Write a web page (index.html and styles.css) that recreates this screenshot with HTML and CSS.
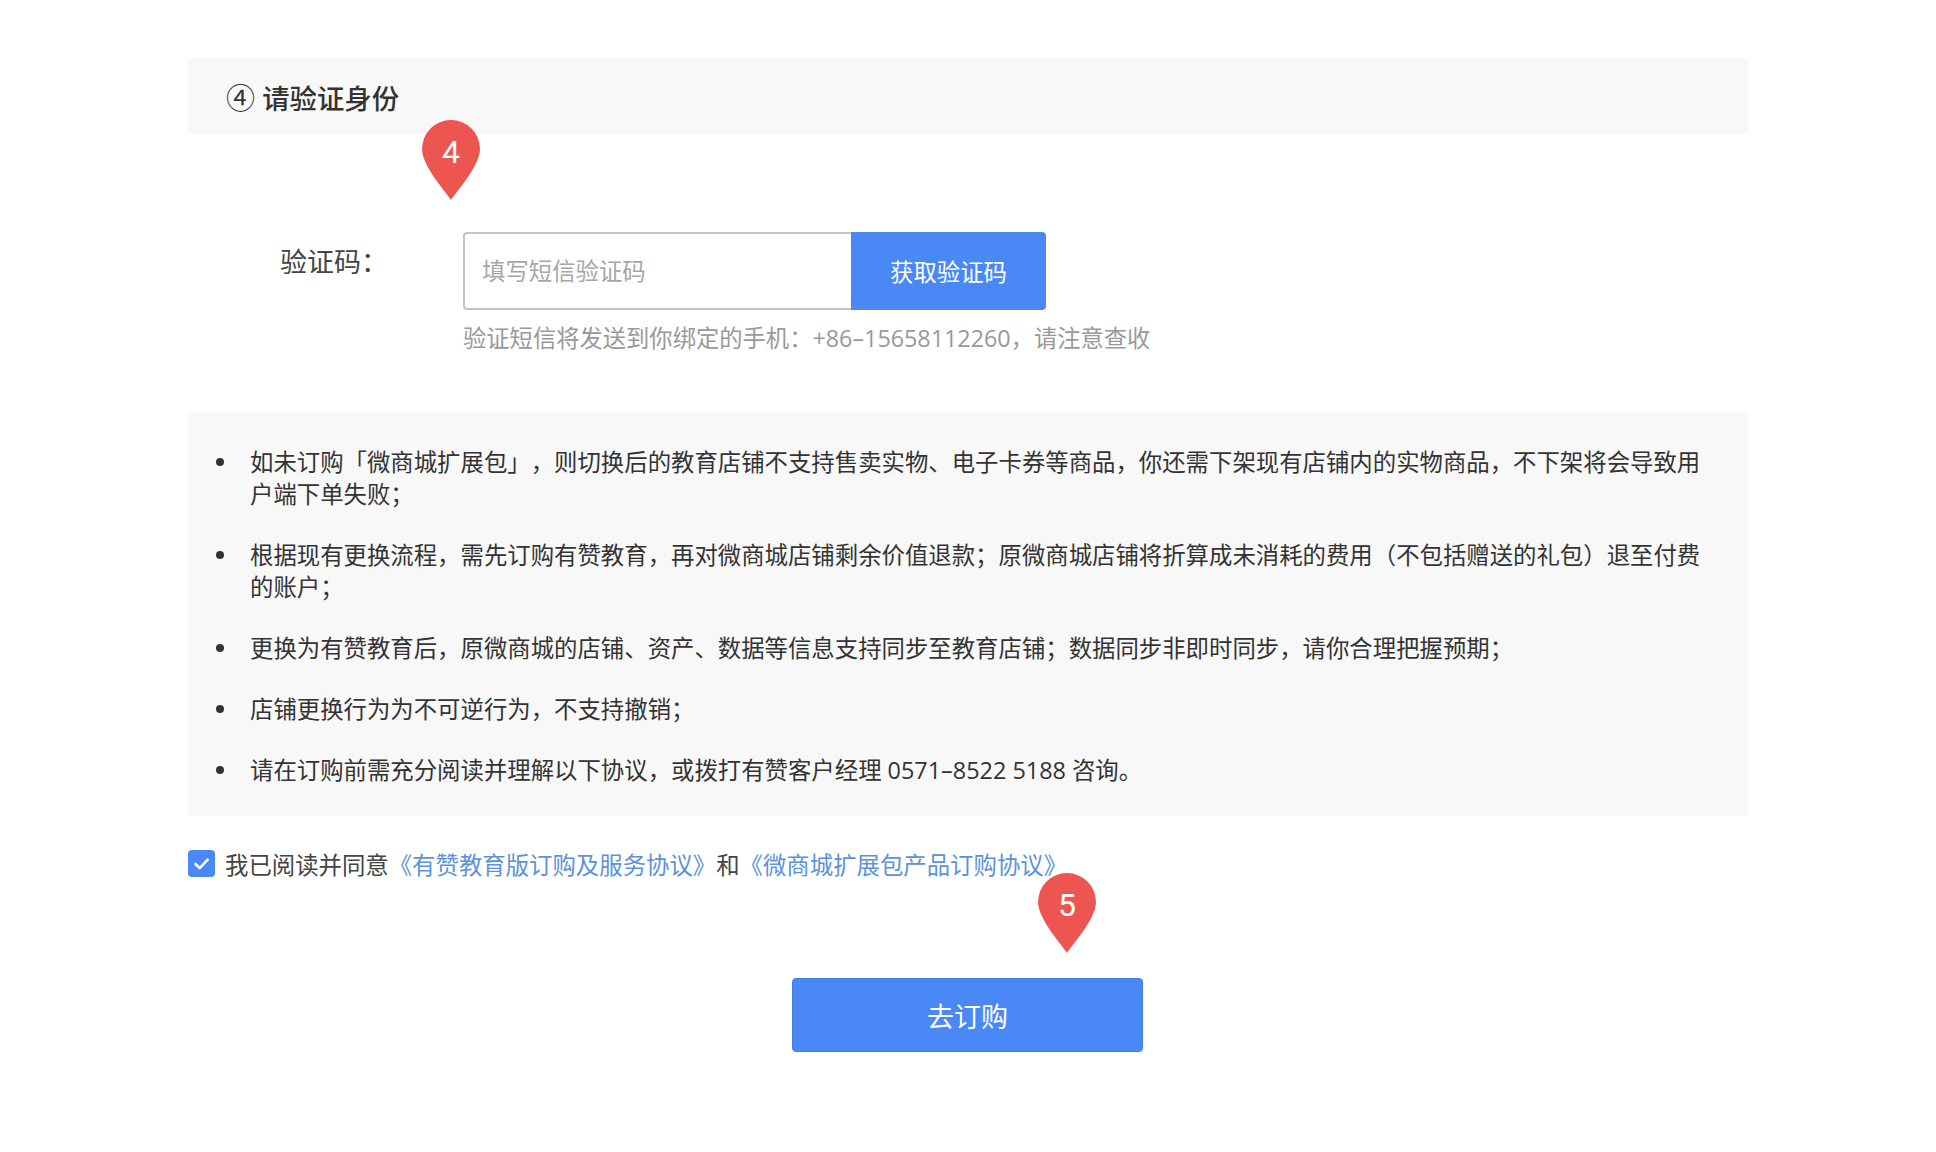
FILE: index.html
```html
<!DOCTYPE html>
<html lang="zh-CN">

<head>
    <meta charset="utf-8">
    <meta name="viewport" content="width=device-width, initial-scale=1.0">
    <title>请验证身份</title>
    <link rel="stylesheet" href="styles.css">
</head>

<body>
    <div class="container">
        <h2 class="titel"><span class="nummer">④</span> 请验证身份</h2>

        <section class="verify">
            <label class="verify_label" for="kode">验证码：</label>
            <div class="verify_felt">
                <div class="verify_input">
                    <input id="kode" type="text" placeholder="填写短信验证码">
                    <button class="knap_kode">获取验证码</button>
                </div>
                <p class="hint">验证短信将发送到你绑定的手机：+86–15658112260，请注意查收</p>
            </div>
        </section>

        <ul class="notice">
            <li>如未订购「微商城扩展包」，则切换后的教育店铺不支持售卖实物、电子卡券等商品，你还需下架现有店铺内的实物商品，不下架将会导致用户端下单失败；</li>
            <li>根据现有更换流程，需先订购有赞教育，再对微商城店铺剩余价值退款；原微商城店铺将折算成未消耗的费用（不包括赠送的礼包）退至付费的账户；</li>
            <li>更换为有赞教育后，原微商城的店铺、资产、数据等信息支持同步至教育店铺；数据同步非即时同步，请你合理把握预期；</li>
            <li>店铺更换行为为不可逆行为，不支持撤销；</li>
            <li>请在订购前需充分阅读并理解以下协议，或拨打有赞客户经理 0571–8522 5188 咨询。</li>
        </ul>

        <div class="agree">
            <span class="checkbox">
                <svg viewBox="0 0 27 27" width="27" height="27">
                    <path d="M7.5 14l4.2 4.2 8-8.6" fill="none" stroke="#fff" stroke-width="2.6" stroke-linecap="round" stroke-linejoin="round" />
                </svg>
            </span>
            <p>我已阅读并同意<a href="#">《有赞教育版订购及服务协议》</a>和<a href="#">《微商城扩展包产品订购协议》</a></p>
        </div>

        <div class="submit">
            <button class="knap_submit">去订购</button>
        </div>

        <!-- markører -->
        <div class="pin pin_4">
            <svg viewBox="0 0 58 80" width="58" height="80">
                <path d="M29 80C24 72 0 46 0 29A29 29 0 0 1 58 29C58 46 34 72 29 80Z" fill="#ed5550" />
            </svg>
            <span>4</span>
        </div>
        <div class="pin pin_5">
            <svg viewBox="0 0 58 80" width="58" height="80">
                <path d="M29 80C24 72 0 46 0 29A29 29 0 0 1 58 29C58 46 34 72 29 80Z" fill="#ed5550" />
            </svg>
            <span>5</span>
        </div>
    </div>
</body>

</html>
```

FILE: styles.css
```css
* {
    box-sizing: border-box;
}

body {
    margin: 0;
    background-color: #fff;
    color: #333;
    font-family: "Open Sans", "Noto Sans CJK SC", sans-serif;
    text-spacing-trim: space-all;
}

.container {
    position: relative;
    width: 1560px;
    height: 1152px;
    margin-left: 188px;
    padding-top: 58px;
}

.titel {
    margin: 0;
    height: 76px;
    padding: 20px 0 0 38px;
    background-color: #f8f8f8;
    font-size: 27.4px;
    line-height: 40px;
    font-weight: 500;
    color: #333;
}

.nummer {
    font-size: 29px;
    font-weight: 400;
}

/* Verify form */
.verify {
    display: flex;
    padding-top: 98px;
}

.verify_label {
    width: 275px;
    padding: 12px 0 0 92px;
    font-size: 27px;
    line-height: 36px;
    color: #444;
}

.verify_input {
    display: flex;
    height: 78px;
}

.verify_input input {
    width: 388px;
    padding: 0 17px;
    border: 2px solid #c4c4c4;
    border-right: none;
    border-radius: 4px 0 0 4px;
    outline: none;
    font-family: inherit;
    font-size: 23.4px;
}

.verify_input input::placeholder {
    color: #a6a6a6;
}

.knap_kode {
    width: 195px;
    padding-bottom: 2px;
    border: none;
    border-radius: 0 4px 4px 0;
    background-color: #4a89f5;
    color: #fff;
    font-family: inherit;
    font-size: 23.4px;
}

.hint {
    margin: 11px 0 0;
    font-size: 23.3px;
    line-height: 34px;
    color: #999;
}

/* Notice */
.notice {
    margin: 58px 0 0;
    height: 403px;
    padding: 33px 38px 0 62px;
    border-radius: 4px;
    background-color: #f8f8f8;
    list-style: none;
    font-size: 23.4px;
    line-height: 32px;
    color: #333;
}

.notice li {
    position: relative;
    margin-bottom: 29px;
}

.notice li::before {
    content: "";
    position: absolute;
    left: -34px;
    top: 12px;
    width: 8px;
    height: 8px;
    border-radius: 50%;
    background-color: #333;
}

/* Agree */
.agree {
    display: flex;
    align-items: flex-start;
    margin-top: 34px;
}

.checkbox {
    display: block;
    width: 27px;
    height: 27px;
    border-radius: 4px;
    background-color: #4a89f5;
}

.checkbox svg {
    display: block;
}

.agree p {
    margin: 0 0 0 10px;
    font-size: 23.4px;
    line-height: 30px;
    color: #444;
}

.agree a {
    color: #5b93d9;
    text-decoration: none;
}

/* Submit */
.submit {
    display: flex;
    justify-content: center;
    margin-top: 98px;
    padding-right: 1px;
}

.knap_submit {
    width: 351px;
    height: 74px;
    border: 1px solid #3f7fe8;
    border-radius: 4px;
    background-color: #4a89f5;
    color: #fff;
    font-family: inherit;
    font-size: 27px;
}

/* Pins */
.pin {
    position: absolute;
    width: 58px;
    height: 80px;
    text-align: center;
}

.pin svg {
    display: block;
}

.pin span {
    position: absolute;
    top: 14px;
    left: 0;
    width: 100%;
    font-family: Roboto, sans-serif;
    font-size: 32px;
    line-height: 36px;
    color: #fff;
}

.pin_4 {
    left: 234px;
    top: 120px;
}

.pin_5 {
    left: 850px;
    top: 873px;
}
```
